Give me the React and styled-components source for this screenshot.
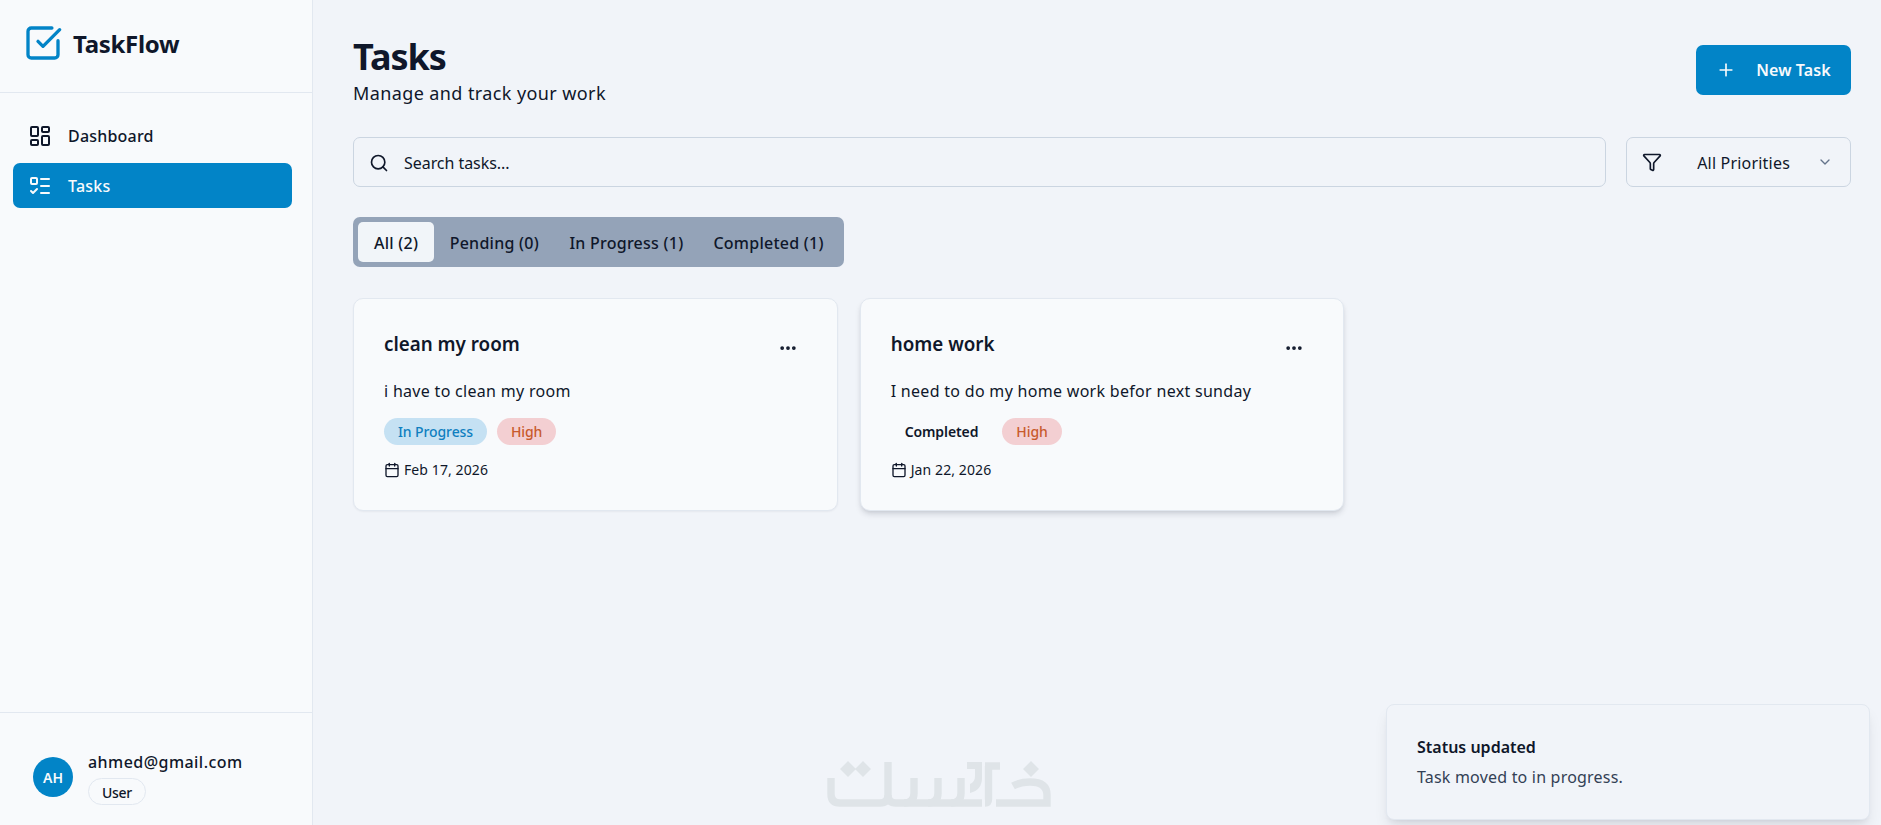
import React from "react";
import styled, { createGlobalStyle } from "styled-components";
import { SquareCheckBig, LayoutDashboard, ListTodo, Search, Funnel, ChevronDown, Plus, Ellipsis, Calendar } from "lucide-react";

const Global = createGlobalStyle`
  html, body { margin: 0; padding: 0; height: 100%; }
  body { font-family: "Noto Sans", "Open Sans", sans-serif; color: #0f172a; background: #f1f5f9; overflow: hidden; }
  * { box-sizing: border-box; }
`;
const Shell = styled.div`display: flex; height: 825px; width: 1881px; position: relative; background: #f1f4f9;`;
const Sidebar = styled.aside`width: 313px; flex: none; background: #f8fafc; border-right: 1px solid #e2e8f0; display: flex; flex-direction: column;`;
const Brand = styled.div`height: 93px; border-bottom: 1px solid #e2e8f0; padding: 0 0 6px 23px; display: flex; align-items: center; gap: 10px; color: #0284c7;`;
const BrandName = styled.span`font-size: 24px; font-weight: 700; color: #0f172a; letter-spacing: -0.3px;`;
const Nav = styled.nav`flex: 1; padding: 20px 20px 20px 13px; display: flex; flex-direction: column; gap: 5px;`;
const NavItem = styled.a`
  height: 45px; border-radius: 7px; display: flex; align-items: center; gap: 16px; padding: 0 15px;
  font-size: 16px; font-weight: 500; letter-spacing: 0.2px;
  background: ${p => (p.$active ? "#0284c7" : "transparent")};
  color: ${p => (p.$active ? "#f8fafc" : "#0f172a")};
`;
const UserBox = styled.div`height: 113px; border-top: 1px solid #e2e8f0; padding: 37px 0 0 33px; display: flex; gap: 15px;`;
const Avatar = styled.div`width: 40px; height: 40px; margin-top: 7px; border-radius: 50%; background: #0284c7; color: #f8fafc; display: flex; align-items: center; justify-content: center; font-size: 14px; font-weight: 600;`;
const UserText = styled.div`display: flex; flex-direction: column; align-items: flex-start; gap: 4px;`;
const Email = styled.div`font-size: 16px; line-height: 24px; font-weight: 500; letter-spacing: 0.45px;`;
const Role = styled.span`height: 27px; padding: 1px 13px 0; border: 1px solid #e2e8f0; border-radius: 14px; font-size: 14px; font-weight: 500; letter-spacing: -0.3px; display: flex; align-items: center;`;
const Main = styled.main`flex: 1; padding: 37px 30px 0 40px; min-width: 0;`;
const Header = styled.header`display: flex; justify-content: space-between; align-items: flex-start; height: 100px;`;
const Title = styled.h1`margin: 0; font-size: 36px; line-height: 40px; font-weight: 700; letter-spacing: -1px;`;
const Subtitle = styled.p`margin: 3px 0 0; font-size: 18px; line-height: 26px; letter-spacing: 0.4px;`;
const PrimaryButton = styled.button`
  width: 155px; height: 50px; margin-top: 8px; border: 0; border-radius: 7px; background: #0284c7; color: #f8fafc;
  font: 600 16px "Noto Sans", sans-serif; letter-spacing: 0.1px; display: flex; align-items: center; justify-content: center; gap: 20px;
`;
const Filters = styled.div`display: flex; gap: 20px; height: 50px;`;
const SearchBox = styled.div`flex: 1; border: 1px solid #cbd5e1; border-radius: 7px; display: flex; align-items: center; gap: 15px; padding: 2px 15px 0; font-size: 16px; letter-spacing: -0.05px;`;
const Select = styled.div`width: 225px; border: 1px solid #cbd5e1; border-radius: 7px; display: flex; align-items: center; padding: 0 17px 0 15px; font-size: 16px; letter-spacing: 0.2px;`;
const SelectLabel = styled.span`flex: 1; text-align: right; padding: 2px 27px 0 0;`;
const Tabs = styled.div`display: inline-flex; margin-top: 30px; height: 50px; padding: 5px; background: #94a3b8; border-radius: 7px;`;
const Tab = styled.button`
  height: 40px; border: 0; border-radius: 5px; padding: 2px ${p => p.$pad || 15}px 0; font: 500 16px "Noto Sans", sans-serif; letter-spacing: 0.25px; color: #0f172a;
  background: ${p => (p.$active ? "#f1f5f9" : "transparent")};
`;
const Grid = styled.div`display: grid; grid-template-columns: repeat(3, 1fr); gap: 22px; margin-top: 31px;`;
const Card = styled.article`
  height: 213px; padding: 30px; background: #f8fafc; border: 1px solid #e2e8f0; border-radius: 10px;
  box-shadow: ${p => (p.$raised ? "0 4px 6px -1px rgba(15,23,42,.14), 0 2px 4px -2px rgba(15,23,42,.1)" : "0 1px 2px rgba(15,23,42,.05)")};
`;
const CardTop = styled.div`display: flex; justify-content: space-between; align-items: flex-start; height: 30px; padding-right: 9px;`;
const CardTitle = styled.h3`margin: 1px 0 0; font-size: 18.8px; line-height: 28px; font-weight: 600;`;
const More = styled.span`display: flex; margin-top: 9px;`;
const Desc = styled.p`margin: 21px 0 0; font-size: 16px; line-height: 22px; letter-spacing: 0.3px;`;
const Badges = styled.div`display: flex; gap: 10px; margin-top: 16px;`;
const tones = {
  blue: "background:#c5e1f3;color:#0f7fc0;font-weight:500;",
  red: "background:#f3cfd2;color:#c85a2c;font-weight:500;",
  plain: "background:transparent;color:#0f172a;font-weight:600;",
};
const Badge = styled.span`height: 27px; padding: 0 14px; border-radius: 14px; font-size: 14px; letter-spacing: -0.1px; display: flex; align-items: center; ${p => tones[p.$tone]}`;
const DateRow = styled.div`display: flex; align-items: center; gap: 4px; margin-top: 13px; font-size: 14px; line-height: 24px; letter-spacing: 0.1px;`;
const Watermark = styled.svg`position: absolute; left: 800px; top: 740px; width: 280px; height: 85px;`;
const Toast = styled.div`
  position: absolute; left: 1386px; top: 704px; width: 484px; height: 116px; padding: 30px; background: #f1f4f9;
  border: 1px solid #e2e8f0; border-radius: 8px; box-shadow: 0 10px 15px -3px rgba(15,23,42,.1), 0 4px 6px -4px rgba(15,23,42,.1);
`;
const ToastTitle = styled.div`font-size: 16px; line-height: 24px; font-weight: 600; letter-spacing: 0px;`;
const ToastText = styled.div`font-size: 16px; line-height: 26px; color: #334155; letter-spacing: 0.2px; margin-top: 5px;`;

const tasks = [
  { title: "clean my room", desc: "i have to clean my room", status: "In Progress", tone: "blue", date: "Feb 17, 2026" },
  { title: "home work", desc: "I need to do my home work befor next sunday", status: "Completed", tone: "plain", date: "Jan 22, 2026", raised: true },
];

export default function App() {
  return (
    <Shell>
      <Global />
      <Sidebar>
        <Brand>
          <SquareCheckBig size={40} strokeWidth={2} />
          <BrandName>TaskFlow</BrandName>
        </Brand>
        <Nav>
          <NavItem><LayoutDashboard size={24} strokeWidth={2} />Dashboard</NavItem>
          <NavItem $active><ListTodo size={24} strokeWidth={2} />Tasks</NavItem>
        </Nav>
        <UserBox>
          <Avatar>AH</Avatar>
          <UserText>
            <Email>ahmed@gmail.com</Email>
            <Role>User</Role>
          </UserText>
        </UserBox>
      </Sidebar>
      <Main>
        <Header>
          <div>
            <Title>Tasks</Title>
            <Subtitle>Manage and track your work</Subtitle>
          </div>
          <PrimaryButton><Plus size={20} strokeWidth={2} />New Task</PrimaryButton>
        </Header>
        <Filters>
          <SearchBox><Search size={20} strokeWidth={2} />Search tasks...</SearchBox>
          <Select>
            <Funnel size={20} strokeWidth={2} />
            <SelectLabel>All Priorities</SelectLabel>
            <ChevronDown size={16} color="#64748b" />
          </Select>
        </Filters>
        <Tabs>
          <Tab $active $pad={16}>All (2)</Tab>
          <Tab $pad={15.5}>Pending (0)</Tab>
          <Tab>In Progress (1)</Tab>
          <Tab>Completed (1)</Tab>
        </Tabs>
        <Grid>
          {tasks.map(t => (
            <Card key={t.title} $raised={t.raised}>
              <CardTop>
                <CardTitle>{t.title}</CardTitle>
                <More><Ellipsis size={20} strokeWidth={2.5} /></More>
              </CardTop>
              <Desc>{t.desc}</Desc>
              <Badges>
                <Badge $tone={t.tone}>{t.status}</Badge>
                <Badge $tone="red">High</Badge>
              </Badges>
              <DateRow><Calendar size={16} strokeWidth={2} />{t.date}</DateRow>
            </Card>
          ))}
        </Grid>
      </Main>
      <Watermark viewBox="0 0 280 85" fill="none" stroke="#dfe4e8" strokeWidth="7.4" aria-hidden="true">
        <path d="M31 38V54Q31 63 40 63H80Q88 63 88 55V22" />
        <path d="M88 55Q88 63 96 63H182" />
        <path d="M114 38V53Q114 63 104 63M138 38V53Q138 63 128 63M161 38V53Q161 63 151 63" />
        <path d="M167 22H182V38Q182 50 170 53V44Q175 42 175 36V29H167Z" fill="#dfe4e8" stroke="none" />
        <path d="M185 26H200M188.5 26V59Q188.5 63 185 63" />
        <path d="M196 63H247V55Q247 42 230 42Q220 42 213 46" />
        <g fill="#dfe4e8" stroke="none">
          <path d="M48 21l8 8-8 8-8-8zM63 21l8 8-8 8-8-8zM231 21l8 8-8 8-8-8z" />
        </g>
      </Watermark>
      <Toast>
        <ToastTitle>Status updated</ToastTitle>
        <ToastText>Task moved to in progress.</ToastText>
      </Toast>
    </Shell>
  );
}
